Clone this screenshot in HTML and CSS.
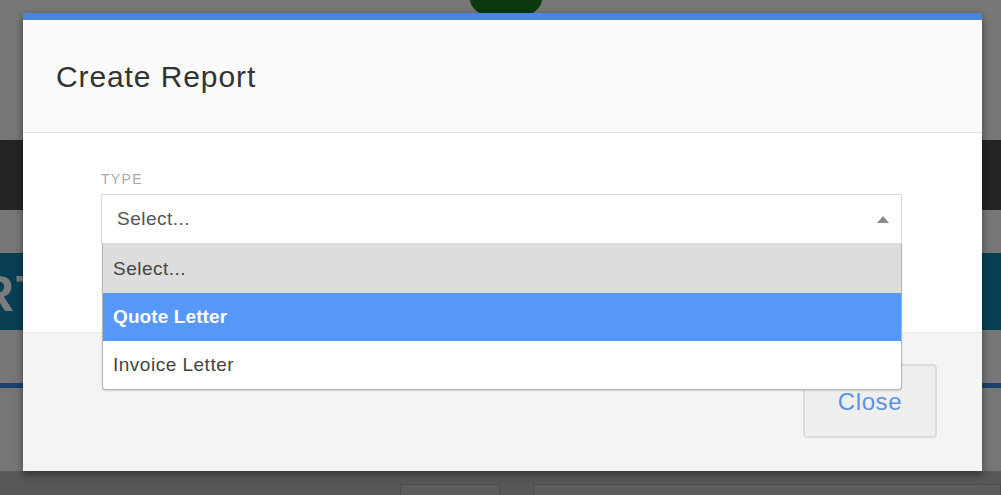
FILE: index.html
```html
<!DOCTYPE html>
<html>
<head>
<meta charset="utf-8">
<link rel="stylesheet" href="styles.css">
</head>
<body>
<div class="page">
  <div class="pg-top"><div class="avatar"></div></div>
  <div class="pg-nav"></div>
  <div class="pg-gap1"></div>
  <div class="pg-hero"><span class="hero-text">RT</span></div>
  <div class="pg-gap2"></div>
  <div class="pg-line"></div>
  <div class="pg-rest"></div>
  <div class="pg-bottom"><div class="card c1"></div><div class="card c2"></div></div>
</div>

<div class="modal">
  <div class="modal-header">
    <h1 class="modal-title">Create Report</h1>
  </div>
  <div class="modal-body">
    <div class="field">
      <div class="field-label">TYPE</div>
      <div class="select">
        <span class="select-value">Select...</span>
        <svg class="select-arrow" width="12" height="7" viewBox="0 0 12 7"><polygon points="0,7 6,0 12,7" fill="#8a8a8a"/></svg>
      </div>
      <ul class="options">
        <li class="option option-placeholder">Select...</li>
        <li class="option option-active">Quote Letter</li>
        <li class="option">Invoice Letter</li>
      </ul>
    </div>
  </div>
  <div class="modal-footer">
    <button class="btn-close">Close</button>
  </div>
</div>
</body>
</html>
```

FILE: styles.css
```css
* { box-sizing: border-box; }
html, body { margin: 0; padding: 0; }
body {
  width: 1001px;
  height: 495px;
  overflow: hidden;
  background: #777;
  font-family: "Liberation Sans", Arial, sans-serif;
  position: relative;
}
.page { display: flex; flex-direction: column; height: 495px; }
.pg-top { height: 140px; background: #777; position: relative; }
.avatar {
  position: absolute; left: 470px; top: -22px;
  width: 72px; height: 42px; border-radius: 50%;
  background: #0b3a10;
}
.pg-nav { height: 70px; background: #242424; }
.pg-gap1 { height: 43px; background: #777; }
.pg-hero { height: 77px; background: #093f55; position: relative; overflow: hidden; }
.hero-text {
  position: absolute; left: 0; top: 12px;
  font-size: 50px; font-weight: bold; color: #7c7c7c; letter-spacing: 2px;
  clip-path: inset(0 0 0 22px);
  transform: translateX(-22px);
}
.pg-gap2 { height: 53px; background: #777; }
.pg-line { height: 5px; background: #1c4070; }
.pg-rest { flex: 1; background: #767676; }
.pg-bottom { height: 24px; background: #575757; display: flex; padding-top: 13px; }
.card { height: 20px; border: 1px solid #4c4c4c; background: #5c5c5c; }
.c1 { margin-left: 400px; width: 100px; border-top-right-radius: 2px; }
.c2 { margin-left: 33px; flex: 1; }

.modal {
  position: absolute;
  left: 23px; top: 13px;
  width: 959px; height: 458px;
  display: flex; flex-direction: column;
  background: #f4f4f4;
  border-top: 7px solid #4a86d9;
  box-shadow: 0 3px 8px rgba(0,0,0,0.45);
}
.modal-header {
  height: 113px;
  background: #fafafa;
  border-bottom: 1px solid #e3e3e3;
  padding: 0 33px;
  display: flex; align-items: center;
}
.modal-title {
  margin: 0; padding-top: 2px;
  font-size: 30px; font-weight: normal; color: #333;
  letter-spacing: 0.9px;
}
.modal-body {
  height: 200px;
  background: #fff;
  border-bottom: 1px solid #e8e8e8;
  padding: 38px 0 0 78px;
  position: relative;
}
.field { width: 801px; position: relative; }
.field-label {
  font-size: 14px; color: #a8a8a8; line-height: 16px; margin-bottom: 7px;
  letter-spacing: 1.3px;
}
.select {
  height: 50px;
  border: 1px solid #dcdcdc;
  background: #fff;
  display: flex; align-items: center; justify-content: space-between;
  padding: 0 12px 0 15px;
}
.select-value { font-size: 19px; color: #555; letter-spacing: 0.5px; }
.options {
  position: absolute; left: 1px; right: 0; top: 73px;
  margin: 0; padding: 0; list-style: none;
  background: #fff;
  border: 1px solid #b5b5b5; border-top: none;
  border-radius: 0 0 4px 4px;
  box-shadow: 0 1px 2px rgba(0,0,0,0.15);
  z-index: 2;
}
.option {
  height: 48px; display: flex; align-items: center;
  padding-left: 10px;
  font-size: 19px; color: #444; letter-spacing: 0.5px;
}
.option-placeholder { height: 49px; background: #dddddd; }
.option-active { background: #5698f8; color: #fff; font-weight: bold; letter-spacing: 0.1px; }
.modal-footer {
  flex: 1;
  display: flex; justify-content: flex-end; align-items: flex-start;
  padding: 31px 45px 0 0;
}
.btn-close {
  width: 134px; height: 74px;
  background: #efefef;
  border: 2px solid #dcdcdc;
  border-radius: 4px;
  font-family: "Liberation Sans", Arial, sans-serif;
  font-size: 24px; color: #5a93e2; letter-spacing: 0.6px;
  padding: 2px 0 0 0;
}
```
